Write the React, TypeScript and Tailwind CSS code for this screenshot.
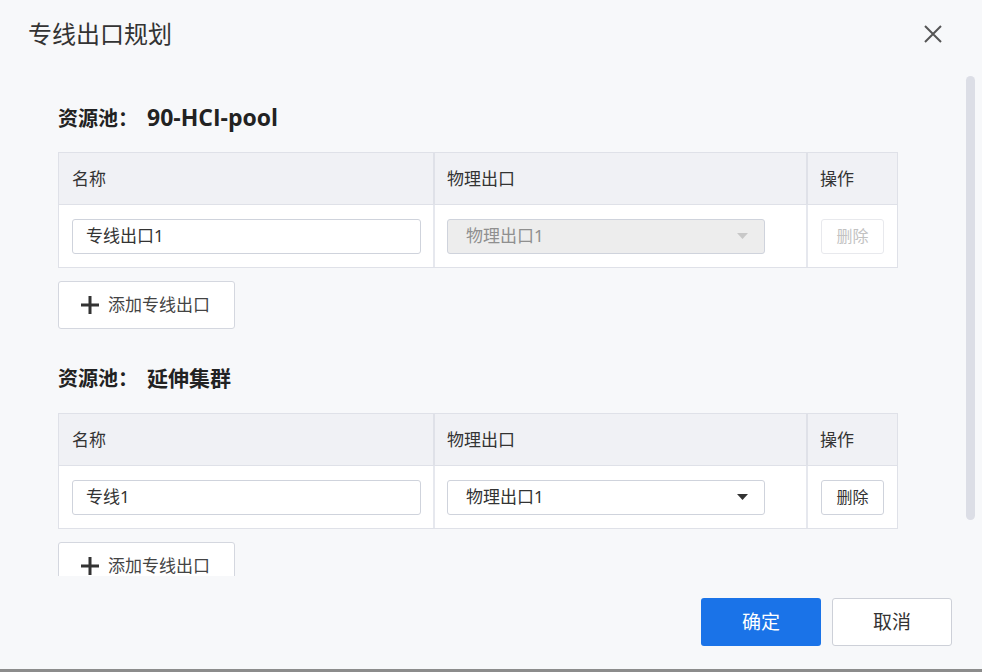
import React from "react";

type Row = { name: string; exit: string; disabled: boolean };

function Caret({ color }: { color: string }) {
  return (
    <svg width="11" height="6" viewBox="0 0 11 6" className="shrink-0">
      <path d="M0 0 L11 0 L5.5 6 Z" fill={color} />
    </svg>
  );
}

function PoolSection({ title, latin, row }: { title: string; latin: boolean; row: Row }) {
  return (
    <div className="flex flex-col">
      <div className="text-[20px] leading-[26px] font-bold text-[#222] h-[26px] flex items-baseline">
        <span>资源池：</span>
        <span
          className={latin ? "ml-[9px] text-[23px]" : "ml-[9px] text-[21px]"}
          style={{ fontFamily: '"Open Sans", "Noto Sans CJK SC", sans-serif' }}
        >
          {title}
        </span>
      </div>
      <div className="mt-[22px] w-[840px] border border-[#dfe1e8] bg-white">
        <div className="grid grid-cols-[374px_373px_1fr] bg-[#f0f1f5] h-[52px] border-b border-[#dfe1e8] text-[17px] text-[#333]">
          <div className="flex items-center pl-[13px]">名称</div>
          <div className="flex items-center pl-[12px] border-l-2 border-[#dfe1e8]">物理出口</div>
          <div className="flex items-center pl-[12px] border-l-2 border-[#dfe1e8]">操作</div>
        </div>
        <div className="grid grid-cols-[374px_373px_1fr] h-[62px] text-[17px]">
          <div className="flex items-center pl-[13px]">
            <div className="w-[349px] h-[35px] border border-[#cfd3dc] rounded-[3px] bg-white flex items-center pl-[13px] text-[#333]">
              {row.name}
            </div>
          </div>
          <div className="flex items-center pl-[12px] border-l-2 border-[#e6e8ee]">
            <div
              className={
                row.disabled
                  ? "w-[318px] h-[35px] border border-[#cfd3dc] rounded-[3px] bg-[#ededed] flex items-center justify-between pl-[18px] pr-[16px] text-[#8f8f8f]"
                  : "w-[318px] h-[35px] border border-[#cfd3dc] rounded-[3px] bg-white flex items-center justify-between pl-[18px] pr-[16px] text-[#333]"
              }
            >
              <span>{row.exit}</span>
              <Caret color={row.disabled ? "#c8c8c8" : "#333"} />
            </div>
          </div>
          <div className="flex items-center pl-[13px] border-l-2 border-[#e6e8ee]">
            <div
              className={
                row.disabled
                  ? "w-[63px] h-[35px] border border-[#e8e9ed] rounded-[3px] bg-white flex items-center justify-center text-[#c2c2c2] text-[16px]"
                  : "w-[63px] h-[35px] border border-[#cfd3dc] rounded-[3px] bg-white flex items-center justify-center text-[#333] text-[16px]"
              }
            >
              删除
            </div>
          </div>
        </div>
      </div>
      <div className="mt-[13px] w-[177px] h-[48px] shrink-0 border border-[#d4d7df] rounded-[3px] bg-white flex items-center pl-[22px] text-[17px] text-[#444]">
        <svg width="18" height="18" viewBox="0 0 18 18" className="shrink-0">
          <path d="M9 0 V18 M0 9 H18" stroke="#333" strokeWidth="3" />
        </svg>
        <span className="ml-[9px]">添加专线出口</span>
      </div>
    </div>
  );
}

export default function App() {
  return (
    <div
      className="w-[982px] h-[672px] bg-[#f7f8fa] flex flex-col overflow-hidden border-b-[3px] border-[#8c8c8c]"
      style={{ fontFamily: '"Noto Sans", "Noto Sans CJK SC", sans-serif' }}
    >
      <div className="h-[68px] shrink-0 flex items-center justify-between pl-[28px] pr-[40px]">
        <div className="text-[24px] text-[#333] leading-none">专线出口规划</div>
        <svg width="18" height="18" viewBox="0 0 18 18">
          <path d="M1 1 L17 17 M17 1 L1 17" stroke="#555" strokeWidth="2" />
        </svg>
      </div>
      <div className="h-[508px] shrink-0 flex">
        <div className="flex-1 overflow-hidden pl-[58px] pt-[36px] flex flex-col gap-[36px]">
          <PoolSection
            title="90-HCI-pool"
            latin={true}
            row={{ name: "专线出口1", exit: "物理出口1", disabled: true }}
          />
          <PoolSection
            title="延伸集群"
            latin={false}
            row={{ name: "专线1", exit: "物理出口1", disabled: false }}
          />
        </div>
        <div className="w-[9px] mr-[7px] pt-[8px]">
          <div className="w-[9px] h-[444px] rounded-full bg-[#dcdee6]" />
        </div>
      </div>
      <div className="flex-1 flex justify-end items-start pt-[22px] pr-[30px] gap-[11px]">
        <div className="w-[120px] h-[48px] rounded-[3px] bg-[#1a73e8] text-white text-[19px] flex items-center justify-center">
          确定
        </div>
        <div className="w-[120px] h-[48px] rounded-[3px] bg-white border border-[#cdd0d8] text-[#333] text-[19px] flex items-center justify-center">
          取消
        </div>
      </div>
    </div>
  );
}
